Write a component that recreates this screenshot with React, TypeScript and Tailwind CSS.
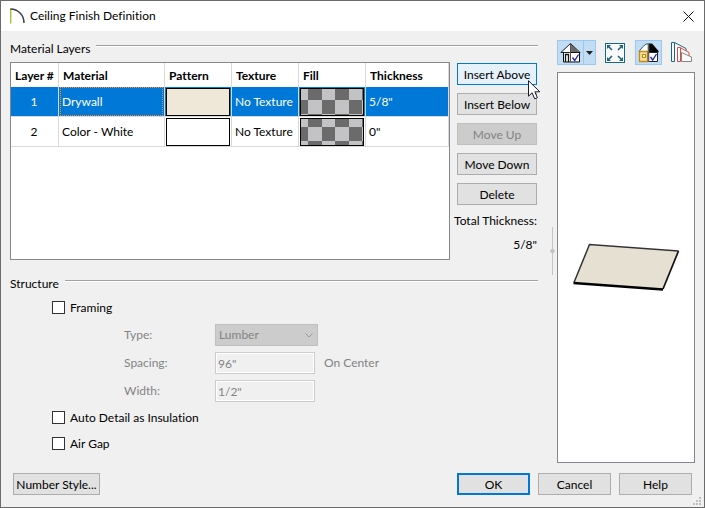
import { useState } from "react";
import type { ReactNode } from "react";

type Layer = { id: number; material: string; pattern: string; texture: string; thickness: string };

const layers: Layer[] = [
  { id: 1, material: "Drywall", pattern: "#efe8d9", texture: "No Texture", thickness: '5/8"' },
  { id: 2, material: "Color - White", pattern: "#ffffff", texture: "No Texture", thickness: '0"' },
];

const pushBase = "h-[22px] border pt-px text-center leading-4 whitespace-nowrap";
const pushNormal = "border-[#adadad] bg-[#e1e1e1]";

function PushButton({ children, className = "", look = pushNormal, disabled = false }: {
  children: ReactNode;
  className?: string;
  look?: string;
  disabled?: boolean;
}) {
  return (
    <button type="button" disabled={disabled} className={`${pushBase} ${look} ${className}`}>
      {children}
    </button>
  );
}

function SectionHeading({ children }: { children: ReactNode }) {
  return (
    <div className="flex items-start gap-1.5">
      <h2 className="leading-4">{children}</h2>
      <div className="mt-1 h-0.5 flex-1 border-t border-[#a0a0a0] bg-white" />
    </div>
  );
}

function Checker({ id, offset }: { id: string; offset: number }) {
  return (
    <svg className="block h-[28px] w-full border border-black" aria-hidden="true">
      <defs>
        <pattern id={id} width="27" height="27" x="-6" y={offset} patternUnits="userSpaceOnUse">
          <rect width="27" height="27" fill="#c3c3c5" />
          <rect x="13" width="14" height="13" fill="#6b6b6b" />
          <rect y="13" width="13" height="14" fill="#6b6b6b" />
        </pattern>
      </defs>
      <rect width="100%" height="100%" fill={`url(#${id})`} />
    </svg>
  );
}

function LayerTable() {
  const [selected, setSelected] = useState(1);
  const heads = ["Layer #", "Material", "Pattern", "Texture", "Fill", "Thickness"];
  return (
    <div className="h-[198px] flex-1 border border-[#828790] bg-white">
      <table className="w-full table-fixed border-collapse">
        <colgroup>
          <col className="w-[48px]" />
          <col className="w-[106px]" />
          <col className="w-[67px]" />
          <col className="w-[67px]" />
          <col className="w-[67px]" />
          <col />
        </colgroup>
        <thead>
          <tr className="h-[24px]">
            {heads.map((h) => (
              <th
                key={h}
                scope="col"
                className="p-0 pt-0.5 pl-1 text-left font-bold whitespace-nowrap shadow-[inset_-1px_0_0_#d9d9d9]"
              >
                {h}
              </th>
            ))}
          </tr>
        </thead>
        <tbody>
          {layers.map((l) => {
            const on = l.id === selected;
            const cell = "p-0 shadow-[inset_-1px_-1px_0_#d9d9d9]";
            return (
              <tr
                key={l.id}
                onClick={() => setSelected(l.id)}
                className={`h-[30px] ${on ? "bg-[#0078d7] text-white" : ""}`}
              >
                <td className={`${cell} pr-0.5 text-center`}>{l.id}</td>
                <td className={`${cell} pr-0.5 pb-px pl-px`}>
                  <div
                    className={`flex h-[29px] items-center border pl-px ${
                      on ? "border-dotted border-[#ff8728]" : "border-transparent"
                    }`}
                  >
                    {l.material}
                  </div>
                </td>
                <td className={`${cell} pr-0.5 pb-px pl-px`}>
                  <div className="h-[28px] border border-black" style={{ backgroundColor: l.pattern }} />
                </td>
                <td className={`${cell} pl-[3px] whitespace-nowrap`}>{l.texture}</td>
                <td className={`${cell} pr-0.5 pb-px pl-px`}>
                  <Checker id={`checker-${l.id}`} offset={l.id === 1 ? -2 : -5} />
                </td>
                <td className={`${cell} pl-[3px]`}>{l.thickness}</td>
              </tr>
            );
          })}
        </tbody>
      </table>
    </div>
  );
}

function CheckRow({ label }: { label: string }) {
  return (
    <label className="flex h-4 items-center gap-[5px]">
      <input
        type="checkbox"
        className="size-[13px] appearance-none border border-[#333333] bg-white checked:bg-[#0078d7]"
      />
      <span className="pt-px">{label}</span>
    </label>
  );
}

function HouseIcon() {
  return (
    <svg width="21" height="21" viewBox="0 0 21 21" fill="none">
      <path d="M3.500 9v10.500h16V9L10.500 2z" fill="#fff" />
      <path d="M10.500 1.500 19.500 10.500H10.500z" fill="#6b6b6b" />
      <path d="M.8 10.500 10.500 1.500 20.200 10.500z" stroke="#222" />
      <path d="M3.500 10v10h16V10.500h-9" stroke="#111" />
      <path d="M5.500 20v-7.500h3V20" stroke="#111" strokeWidth="1.300" />
      <path d="M10.500 2v18" stroke="#555" />
      <path d="m12.500 15.500 2.200 3 3.800-6" stroke="#2222aa" strokeWidth="1.300" />
    </svg>
  );
}

function FitIcon() {
  return (
    <svg width="20" height="20" viewBox="0 0 20 20" fill="none" stroke="#1b6584">
      <rect x="0.500" y="0.500" width="19" height="19" fill="#fafafa" />
      <path d="M2 2h4L2 6zM18 2v4l-4-4zM2 18v-4l4 4zM18 18h-4l4-4z" fill="#1b6584" stroke="none" />
      <path d="m3 3 4 4m10-4-4 4M3 17l4-4m10 4-4-4" strokeWidth="1.600" />
    </svg>
  );
}

function SplitHouseIcon() {
  return (
    <svg width="21" height="21" viewBox="0 0 21 21" fill="none">
      <path d="M1 9.500 4.500 5 8 2h3v7.500z" fill="#fff" stroke="#1b6584" />
      <path d="M11 1.500h3L20.500 9v1.500H11z" fill="#000" />
      <path d="M1.500 9.500h8v10h-8z" fill="#fbe0a0" stroke="#c98a12" strokeWidth="1.300" />
      <path d="M4.500 12.500h3v3h-3z" fill="#fff" stroke="#c98a12" strokeWidth="1.200" />
      <path d="M10.500 10.500h9v9h-9z" fill="#fff" stroke="#222" />
      <path d="M10.500 1.500V20" stroke="#606060" strokeWidth="1.600" />
      <path d="m12.500 15 2.200 3 3.800-6" stroke="#2222aa" strokeWidth="1.300" />
    </svg>
  );
}

function LayersIcon() {
  return (
    <svg width="21" height="21" viewBox="0 0 21 21" fill="#fafafa">
      <path d="M.5 19.500V.500h3L15.500 6.500v13z" stroke="none" />
      <path d="M.5 19.500V.500h3v19zM3.500.500 15 6.500v4" stroke="#1b6584" fill="none" />
      <path d="M6.500 19.500V5.500H9L18 10.500v9z" stroke="none" />
      <path d="M9.500 19.500h-3V5.500H9L18 10.500v4M9.500 5.500v14" stroke="#dd4b41" fill="none" />
      <path d="M10.500 19.500v-9L20.500 15v4.500z" stroke="#858585" />
    </svg>
  );
}

function Pointer() {
  return (
    <svg
      className="pointer-events-none absolute top-[17px] left-[71px]"
      width="13"
      height="20"
      viewBox="0 0 13 20"
      aria-hidden="true"
    >
      <path d="M.5.700v15.500l3.600-3.400 2.600 6 2.700-1.100-2.600-5.900h5z" fill="#fff" stroke="#1b1b2b" />
    </svg>
  );
}

function LayerActions() {
  return (
    <div className="flex w-[80px] flex-col gap-2 pt-px">
      <div className="relative flex">
        <PushButton className="w-full" look="border-[#0078d7] bg-[#e5f1fb]">Insert Above</PushButton>
        <Pointer />
      </div>
      <PushButton>Insert Below</PushButton>
      <PushButton disabled look="border-[#bfbfbf] bg-[#cccccc] text-[#838383]">Move Up</PushButton>
      <PushButton>Move Down</PushButton>
      <PushButton>Delete</PushButton>
      <div className="flex flex-col items-end gap-2 leading-4 whitespace-nowrap">
        <span>Total Thickness:</span>
        <span>5/8"</span>
      </div>
    </div>
  );
}

const fieldBase = "h-[22px] w-[100px] border border-[#cccccc] px-0.5 text-[#838383] shadow-[inset_0_0_0_1px_#fff]";

function FramingFields() {
  return (
    <div className="mt-2 grid grid-cols-[91px_1fr] items-center gap-y-1.5 pl-[72px] text-[#838383]">
      <label htmlFor="type">Type:</label>
      <div className="relative w-[103px]">
        <select
          id="type"
          disabled
          className="h-[22px] w-full appearance-none border border-[#bfbfbf] bg-[#cccccc] px-[3px] text-[#838383] opacity-100"
        >
          <option>Lumber</option>
        </select>
        <svg className="absolute top-[9px] right-[5px]" width="8" height="5" viewBox="0 0 8 5" fill="none">
          <path d="M.5.500 4 4 7.500.500" stroke="#9a9a9a" />
        </svg>
      </div>
      <label htmlFor="spacing">Spacing:</label>
      <div className="flex items-center gap-[9px]">
        <input id="spacing" disabled defaultValue={'96"'} className={fieldBase} />
        <span>On Center</span>
      </div>
      <label htmlFor="width">Width:</label>
      <input id="width" disabled defaultValue={'1/2"'} className={fieldBase} />
    </div>
  );
}

function Toolbar() {
  const lit = "flex h-[25px] items-center justify-center border border-[#99c9f3] bg-[#c2dcf3]";
  return (
    <div className="flex h-[25px] items-center">
      <button type="button" aria-label="Standard view" className={`${lit} w-[27px]`}>
        <HouseIcon />
      </button>
      <button type="button" aria-label="View options" className={`${lit} w-[12px] border-l-0`}>
        <svg width="7" height="4" viewBox="0 0 7 4">
          <path d="M0 0h7L3.500 4z" fill="#222" />
        </svg>
      </button>
      <button type="button" aria-label="Fill window" className="ml-[9px]">
        <FitIcon />
      </button>
      <button type="button" aria-label="Color" className={`${lit} ml-[10px] w-[27px]`}>
        <SplitHouseIcon />
      </button>
      <button type="button" aria-label="Layers" className="ml-[9px]">
        <LayersIcon />
      </button>
    </div>
  );
}

function Preview() {
  return (
    <div className="flex w-[138px] flex-col gap-[7px]">
      <Toolbar />
      <div className="flex flex-1 border border-[#828790] bg-white pt-[170px] pl-[14px]">
        <svg width="108" height="50" viewBox="0 0 108 50">
          <path d="M17.500 1.500 106.500 8 91 46 2 39.500z" fill="#e6e0d3" />
          <path d="M2 39.500 17.500 1.500 106.500 8" fill="none" stroke="#333" strokeWidth="1.500" />
          <path d="M106.500 8 91 46" stroke="#111" strokeWidth="1.700" />
          <path d="M1.500 40 91 46.500" stroke="#000" strokeWidth="2.300" />
        </svg>
      </div>
    </div>
  );
}

function Splitter() {
  return (
    <div className="flex w-[19px] justify-center pt-[187px] pl-[9px]">
      <svg width="5" height="48" viewBox="0 0 5 48">
        <path d="M2.500 0v48" stroke="#c4c4c4" />
        <circle cx="2.500" cy="24" r="2.300" fill="#c4c4c4" />
      </svg>
    </div>
  );
}

export default function App() {
  return (
    <main className="flex min-h-screen flex-col border border-[#6b6b6b] bg-[#f0f0f0] font-[Lato,'Open_Sans',sans-serif] text-[12px] leading-4 text-black [font-variant-ligatures:none]">
      <header className="flex h-[30px] items-center justify-between bg-white pr-[10px] pl-[9px]">
        <div className="flex items-center gap-[5px]">
          <svg width="15" height="16" viewBox="0 0 15 16" fill="none">
            <path d="M.7.500v15" stroke="#a2c63b" strokeWidth="1.400" />
            <path d="M.5 1C8 1 14 7 14 15" stroke="#3d3d45" strokeWidth="1.500" />
          </svg>
          <h1>Ceiling Finish Definition</h1>
        </div>
        <button type="button" aria-label="Close">
          <svg width="11" height="11" viewBox="0 0 11 11">
            <path d="m.5.500 10 10m0-10-10 10" stroke="#111" />
          </svg>
        </button>
      </header>

      <div className="flex flex-1 pt-[9px] pr-[9px] pl-[9px]">
        <div className="flex-1 pt-px">
          <section>
            <SectionHeading>Material Layers</SectionHeading>
            <div className="mt-[5px] flex gap-[7px] pr-px">
              <LayerTable />
              <LayerActions />
            </div>
          </section>
          <section className="mt-4">
            <SectionHeading>Structure</SectionHeading>
            <div className="mt-[7px] pl-[42px]">
              <CheckRow label="Framing" />
              <div className="pt-px">
                <FramingFields />
              </div>
              <div className="mt-[7px] flex flex-col gap-[10px]">
                <CheckRow label="Auto Detail as Insulation" />
                <CheckRow label="Air Gap" />
              </div>
            </div>
          </section>
        </div>
        <Splitter />
        <Preview />
      </div>

      <footer className="flex gap-2 pt-[10px] pl-[12px]">
        <PushButton className="w-[87px]">Number Style...</PushButton>
        <div className="flex-1" />
        <PushButton className="w-[73px]" look="border-2 border-[#0078d7] bg-[#e1e1e1]">OK</PushButton>
        <PushButton className="w-[73px]">Cancel</PushButton>
        <PushButton className="w-[73px]">Help</PushButton>
        <svg className="mt-[24px] mr-[3px] mb-[2px] -ml-[7px]" width="8" height="8" viewBox="0 0 8 8" fill="#bfbfbf">
          <path d="M6 0h2v2H6zM3 3h2v2H3zM6 3h2v2H6zM0 6h2v2H0zM3 6h2v2H3zM6 6h2v2H6z" />
        </svg>
      </footer>
    </main>
  );
}
